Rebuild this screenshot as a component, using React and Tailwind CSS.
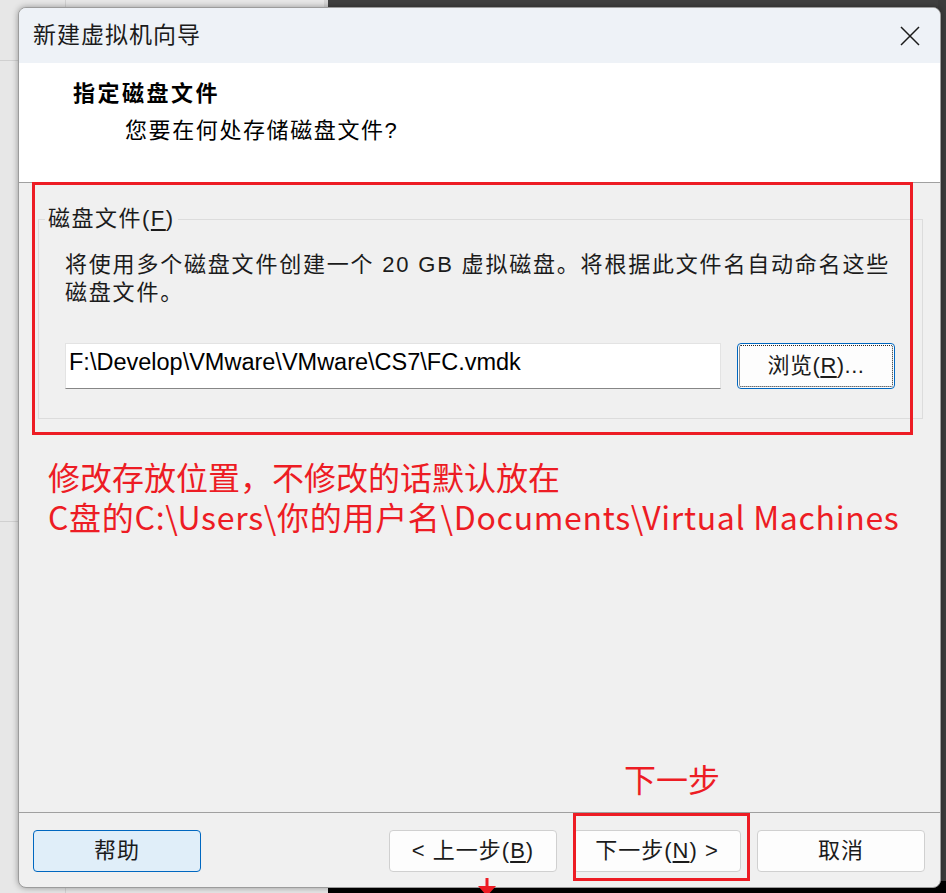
export default function App() {
  const ui = "font-['Liberation_Sans','Noto_Sans_CJK_SC',sans-serif]";
  const btn =
    "flex h-[42px] w-[168px] items-center justify-center rounded-[4px] border border-[#d0d0d0] bg-[#fdfdfd] text-[22px] leading-none tracking-[1px] text-[#1b1b1b]";
  return (
    <div className={`relative h-[893px] w-[946px] overflow-hidden bg-[#e7e7e7] pl-[18px] pt-[7px] ${ui}`}>
      {/* desktop behind the dialog */}
      <div className="absolute left-[328px] right-0 top-0 h-[14px] bg-[#404040]" />
      <div className="absolute left-[324px] top-0 h-[14px] w-[4px] bg-[#d6d6d6]" />
      <div className="absolute bottom-0 right-0 top-0 w-[8px] bg-[#3c3c3c]" />
      <div className="absolute bottom-0 left-[328px] right-0 h-[12px] bg-black" />
      <div className="absolute left-[65px] top-0 h-[14px] w-px bg-[#d2d2d2]" />
      <div className="absolute bottom-0 left-[65px] h-[12px] w-px bg-[#d2d2d2]" />
      <div className="absolute left-0 top-[60px] h-px w-[20px] bg-[#d0d0d0]" />
      <div className="absolute left-0 top-[521px] h-px w-[20px] bg-[#d0d0d0]" />

      {/* dialog */}
      <div className="relative z-10 flex h-[881px] w-[923px] flex-col overflow-hidden rounded-[8px] border border-[#9c9c9c] bg-[#f0f0f0] shadow-[0_0_6px_rgba(0,0,0,0.35)]">
        {/* title bar */}
        <div className="flex h-[55px] shrink-0 items-center justify-between bg-[#eef2f7] pl-[14px] pr-[20px]">
          <span className="text-[23px] leading-none tracking-[1px] text-[#1b1b1b]">新建虚拟机向导</span>
          <svg width="20" height="20" viewBox="0 0 20 20">
            <path d="M1 1L19 19M19 1L1 19" stroke="#1b1b1b" strokeWidth="1.5" fill="none" />
          </svg>
        </div>

        {/* header */}
        <div className="h-[120px] shrink-0 border-b border-[#a0a0a0] bg-white pl-[54px] pt-[17px] text-black">
          <div className="text-[22px] font-bold leading-[28px] tracking-[2.5px]">指定磁盘文件</div>
          <div className="mt-[9px] pl-[52px] text-[22px] leading-[28px] tracking-[1.6px]">您要在何处存储磁盘文件?</div>
        </div>

        {/* body */}
        <div className="flex flex-1 flex-col">
          <fieldset className="ml-[19px] mr-[17px] mt-[22px] border border-[#dcdcdc] p-0">
            <legend className="ml-[6px] px-[3px] text-[22px] leading-[28px] tracking-[1.5px] text-[#1b1b1b]">
              磁盘文件(<span className="underline underline-offset-[3px]">F</span>)
            </legend>
            <div className="pb-[29px] pl-[26px] pr-[27px] pt-[18px]">
              <p className="whitespace-nowrap text-[22px] leading-[28px] tracking-[1.8px] text-[#1b1b1b]">
                将使用多个磁盘文件创建一个 20 GB 虚拟磁盘。将根据此文件名自动命名这些
                <br />
                磁盘文件。
              </p>
              <div className="mt-[36px] flex gap-[16px]">
                <div className="h-[46px] flex-1 border border-[#e3e3e3] border-b-[#868686] bg-white pl-[3px] pt-[4px]">
                  <span className="font-['Liberation_Sans',sans-serif] text-[23.5px] leading-[28px] text-black">
                    F:\Develop\VMware\VMware\CS7\FC.vmdk
                  </span>
                </div>
                <div className="h-[46px] w-[158px] rounded-[4px] border border-[#0067c0] bg-[#fdfdfd] p-[1px]">
                  <div className="flex h-full w-full items-center justify-center rounded-[2px] border border-dotted border-[#222] text-[22px] leading-none tracking-[0.5px] text-[#1b1b1b]">
                    浏览(<span className="underline underline-offset-[3px]">R</span>)...
                  </div>
                </div>
              </div>
            </div>
          </fieldset>

          <div className="ml-[29px] mt-[37px] whitespace-nowrap font-['Noto_Sans_CJK_SC',sans-serif] text-[32px] text-[#ed1c24]">
            <div className="h-[40px] leading-[40px]">修改存放位置，不修改的话默认放在</div>
            <div className="h-[40px] leading-[40px] tracking-[0.7px]">C盘的C:\Users\你的用户名\Documents\Virtual Machines</div>
          </div>

          <p className="mb-[14px] ml-[605px] mt-auto font-['Noto_Sans_CJK_SC',sans-serif] text-[32px] leading-[40px] text-[#ed1c24]">
            下一步
          </p>
        </div>

        {/* footer */}
        <div className="flex h-[75px] shrink-0 items-start justify-between border-t border-[#a0a0a0] pl-[14px] pr-[15px] pt-[17px]">
          <div className="flex h-[42px] w-[168px] items-center justify-center rounded-[4px] border border-[#0067c0] bg-[#e0eef9] text-[22px] leading-none tracking-[1px] text-[#1b1b1b]">
            帮助
          </div>
          <div className="flex gap-[16px]">
            <div className={btn}>
              &lt; 上一步(<span className="underline underline-offset-[3px]">B</span>)
            </div>
            <div className={btn}>
              下一步(<span className="underline underline-offset-[3px]">N</span>) &gt;
            </div>
            <div className={btn}>取消</div>
          </div>
        </div>
      </div>

      {/* annotations over the screenshot */}
      <div className="absolute left-[32px] top-[182px] z-20 h-[253px] w-[881px] border-[3px] border-[#ed1c24]" />
      <div className="absolute left-[573px] top-[813px] z-20 h-[68px] w-[177px] border-[3px] border-[#ed1c24]" />
      <svg className="absolute left-[477px] top-[877px] z-20" width="20" height="20" viewBox="0 0 20 20">
        <rect x="8.5" y="1" width="3" height="9" fill="#ed1c24" />
        <path d="M1 9H19L10 19Z" fill="#ed1c24" />
      </svg>
    </div>
  );
}
